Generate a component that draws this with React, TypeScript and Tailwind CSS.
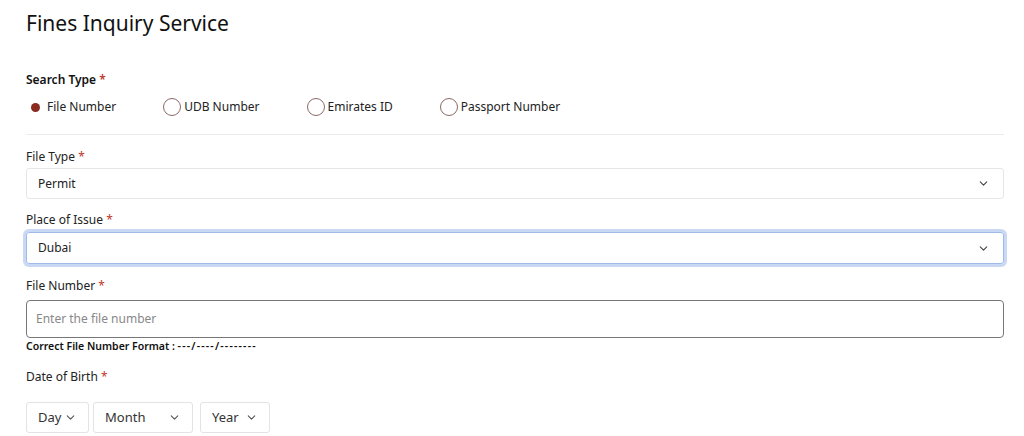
import { ChevronDown } from "lucide-react";

const font = { fontFamily: '"Noto Sans", "Open Sans", sans-serif' };

function Label({ text }: { text: string }) {
  return (
    <div className="text-[12px] leading-[16px] text-[#222]">
      {text} <span className="text-[#c0392b]">*</span>
    </div>
  );
}

function Radio({ label, checked }: { label: string; checked?: boolean }) {
  return (
    <label className="flex items-center gap-[3px] text-[12px] leading-[18px] text-[#222]">
      {checked ? (
        <span className="flex h-[18px] w-[18px] items-center justify-center">
          <span className="h-[9px] w-[9px] rounded-full bg-[#8b2a1e]" />
        </span>
      ) : (
        <span className="h-[18px] w-[18px] rounded-full border border-[#8a6a66]" />
      )}
      <span>{label}</span>
    </label>
  );
}

function SmallSelect({ label, w }: { label: string; w: string }) {
  return (
    <div className={`flex h-[31px] items-center justify-between rounded-[3px] border border-[#e3e3e3] px-[11px] text-[13px] text-[#333] ${w}`}>
      <span>{label}</span>
      <ChevronDown className="h-[13px] w-[13px] text-[#555]" strokeWidth={2} />
    </div>
  );
}

export default function App() {
  return (
    <div className="h-[436px] w-full overflow-hidden bg-white px-[26px] pr-[20px]" style={font}>
      <h1 className="pt-[10px] text-[21px] font-normal leading-[26px] text-[#111]">Fines Inquiry Service</h1>

      <div className="mt-[36px] text-[12px] font-semibold leading-[16px] text-[#111]">
        Search Type <span className="text-[#c0392b]">*</span>
      </div>
      <div className="mt-[10px] flex items-center gap-[47px]">
        <Radio label="File Number" checked />
        <Radio label="UDB Number" />
        <Radio label="Emirates ID" />
        <Radio label="Passport Number" />
      </div>
      <div className="mt-[18px] border-t border-[#ececec]" />

      <div className="mt-[14px]">
        <Label text="File Type" />
        <div className="mt-[3px] flex h-[31px] items-center justify-between rounded-[3px] border border-[#e6e6e6] pl-[11px] pr-[13px] text-[12px] text-[#222]">
          <span>Permit</span>
          <ChevronDown className="h-[13px] w-[13px] text-[#444]" strokeWidth={2} />
        </div>
      </div>

      <div className="mt-[13px]">
        <Label text="Place of Issue" />
        <div className="mt-[4px] flex h-[32px] items-center justify-between rounded-[3px] border border-[#9fb9e8] pl-[11px] pr-[13px] text-[12px] text-[#222] ring-[3px] ring-[#c9d8f5]">
          <span>Dubai</span>
          <ChevronDown className="h-[13px] w-[13px] text-[#444]" strokeWidth={2} />
        </div>
      </div>

      <div className="mt-[14px]">
        <Label text="File Number" />
        <div className="mt-[6px] flex h-[38px] items-center rounded-[4px] border border-[#777] px-[9px] text-[12px] text-[#888]">
          Enter the file number
        </div>
        <div className="mt-[2px] text-[10.5px] font-semibold leading-[12px] text-[#111]">
          Correct File Number Format : <span className="tracking-[1.2px]">---/----/--------</span>
        </div>
      </div>

      <div className="mt-[17px]">
        <Label text="Date of Birth" />
        <div className="mt-[17px] flex">
          <SmallSelect label="Day" w="w-[63px]" />
          <div className="ml-[4px]">
            <SmallSelect label="Month" w="w-[100px]" />
          </div>
          <div className="ml-[7px]">
            <SmallSelect label="Year" w="w-[70px]" />
          </div>
        </div>
      </div>
    </div>
  );
}
